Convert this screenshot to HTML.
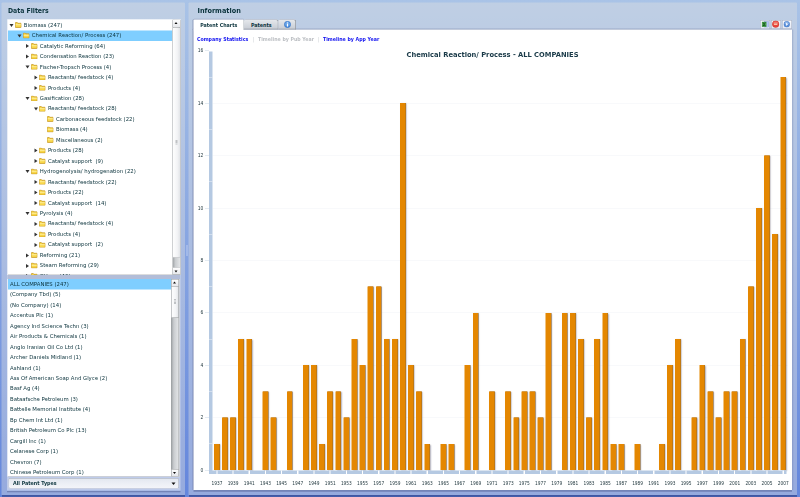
<!DOCTYPE html>
<html lang="en"><head><meta charset="utf-8"><title>Patent Explorer</title>
<style>
html,body{margin:0;padding:0;}
html{width:800px;height:497px;overflow:hidden;}
body{width:800px;height:497px;overflow:hidden;position:relative;background:linear-gradient(to bottom,rgb(169,195,231),rgb(100,134,220));}
#w{position:absolute;left:0;top:0;width:1600px;height:994px;transform:scale(.5);transform-origin:0 0;filter:blur(.6px);
 font-family:"DejaVu Sans","Liberation Sans",sans-serif;color:#0b333c;overflow:hidden;}
.abs{position:absolute;}
.panel{position:absolute;top:4.6px;height:985px;background:rgba(226,226,226,.4);border-radius:2px 2px 0 0;}
.pshadow{position:absolute;top:989.6px;height:4.4px;background:linear-gradient(to bottom,rgba(30,45,110,.55),rgba(30,45,110,.42));}
.ptitle{position:absolute;top:11px;font-weight:bold;font-size:12.6px;line-height:20px;white-space:pre;color:#0b333c;}
.box{position:absolute;background:#fff;overflow:hidden;box-shadow:inset 0 0 0 1px #b7babc;}
.row{position:absolute;left:1px;height:20.92px;line-height:20.92px;font-size:10.7px;white-space:pre;}
.sel{background:#7fceff;}
.fold{position:absolute;top:4.2px;width:13px;height:11.5px;}
.arr{position:absolute;width:0;height:0;}
.arr.c{top:6.4px;border-left:6px solid #333;border-top:4px solid transparent;border-bottom:4px solid transparent;}
.arr.o{top:7.6px;border-top:6px solid #333;border-left:4px solid transparent;border-right:4px solid transparent;}
.sb{position:absolute;background:linear-gradient(to right,#9a9ea1,#c9cccf 35%,#e6e8ea);box-shadow:inset 0 0 0 1px #9ea2a5;}
.sbtn{position:absolute;left:0;width:100%;background:linear-gradient(to bottom,#fff,#e4e6ea);box-shadow:inset 0 0 0 1px #8d9194;border-radius:1px;}
.sthumb{position:absolute;left:0;width:100%;background:linear-gradient(to right,#fff,#f3f4f6 60%,#dfe2e6);box-shadow:inset 0 0 0 1px #8d9194;border-radius:2px;}
.tri-u{position:absolute;left:50%;margin-left:-3.4px;width:0;height:0;border-bottom:4.4px solid #111;border-left:3.4px solid transparent;border-right:3.4px solid transparent;}
.tri-d{position:absolute;left:50%;margin-left:-3.4px;width:0;height:0;border-top:4.4px solid #111;border-left:3.4px solid transparent;border-right:3.4px solid transparent;}
.bar{position:absolute;width:10.8px;background:#e48701;box-shadow:1.1px 0 0 #9a6a2a,2px 1px 2.5px rgba(40,50,90,.35);}
.xl{position:absolute;top:957px;width:40px;margin-left:-20px;text-align:center;font-size:8.6px;line-height:18px;color:#22383f;}
.yl{position:absolute;left:380px;width:26.5px;text-align:right;font-size:8.8px;line-height:14px;color:#22383f;}
.tab{position:absolute;top:38.8px;height:20.4px;font-weight:bold;font-size:9.6px;line-height:21px;text-align:center;white-space:pre;}
.lnk{position:absolute;top:68px;line-height:20px;font-size:9.45px;font-weight:bold;white-space:pre;}
</style></head>
<body><div id="w">
<div class="panel" style="left:3.2px;width:367px;"></div><i class="pshadow" style="left:4px;width:366.2px"></i>
<i class="abs" style="left:13.5px;top:38px;width:347px;height:943px;background:rgba(255,255,255,.38);box-shadow:0 3.6px 0 rgba(60,70,120,.38)"></i>
<div class="ptitle" style="left:16px;font-size:12.3px">Data Filters</div>
<div class="box" style="left:15px;top:39px;width:346px;height:511px;">
<div class="row" style="top:1.00px;width:329px;"><i class="arr o" style="left:3.2px"></i><svg class="fold" style="left:14.0px" viewBox="0 0 13 11.5"><path d="M0.5 2.2 Q0.5 1 1.6 1 L4.6 1 L5.8 2.6 L11.6 2.6 Q12.5 2.6 12.5 3.6 L12.5 10.2 Q12.5 11 11.6 11 L1.4 11 Q0.5 11 0.5 10.2 Z" fill="#f8d648" stroke="#bd8a14" stroke-width="1.25"/><path d="M1.4 4.6 L11.6 4.6 L11.6 6.4 L1.4 6.4 Z" fill="#fff3a8" opacity=".9"/></svg><span class="abs" style="left:31.5px;top:0">Biomass (247)</span></div>
<div class="row sel" style="top:21.92px;width:329px;"><i class="arr o" style="left:19.3px"></i><svg class="fold" style="left:30.1px" viewBox="0 0 13 11.5"><path d="M0.5 2.2 Q0.5 1 1.6 1 L4.6 1 L5.8 2.6 L11.6 2.6 Q12.5 2.6 12.5 3.6 L12.5 10.2 Q12.5 11 11.6 11 L1.4 11 Q0.5 11 0.5 10.2 Z" fill="#f8d648" stroke="#bd8a14" stroke-width="1.25"/><path d="M1.4 4.6 L11.6 4.6 L11.6 6.4 L1.4 6.4 Z" fill="#fff3a8" opacity=".9"/></svg><span class="abs" style="left:47.6px;top:0">Chemical Reaction/ Process (247)</span></div>
<div class="row" style="top:42.84px;width:329px;"><i class="arr c" style="left:36.4px"></i><svg class="fold" style="left:46.2px" viewBox="0 0 13 11.5"><path d="M0.5 2.2 Q0.5 1 1.6 1 L4.6 1 L5.8 2.6 L11.6 2.6 Q12.5 2.6 12.5 3.6 L12.5 10.2 Q12.5 11 11.6 11 L1.4 11 Q0.5 11 0.5 10.2 Z" fill="#f8d648" stroke="#bd8a14" stroke-width="1.25"/><path d="M1.4 4.6 L11.6 4.6 L11.6 6.4 L1.4 6.4 Z" fill="#fff3a8" opacity=".9"/></svg><span class="abs" style="left:63.7px;top:0">Catalytic Reforming (64)</span></div>
<div class="row" style="top:63.76px;width:329px;"><i class="arr c" style="left:36.4px"></i><svg class="fold" style="left:46.2px" viewBox="0 0 13 11.5"><path d="M0.5 2.2 Q0.5 1 1.6 1 L4.6 1 L5.8 2.6 L11.6 2.6 Q12.5 2.6 12.5 3.6 L12.5 10.2 Q12.5 11 11.6 11 L1.4 11 Q0.5 11 0.5 10.2 Z" fill="#f8d648" stroke="#bd8a14" stroke-width="1.25"/><path d="M1.4 4.6 L11.6 4.6 L11.6 6.4 L1.4 6.4 Z" fill="#fff3a8" opacity=".9"/></svg><span class="abs" style="left:63.7px;top:0">Condensation Reaction (23)</span></div>
<div class="row" style="top:84.68px;width:329px;"><i class="arr o" style="left:35.4px"></i><svg class="fold" style="left:46.2px" viewBox="0 0 13 11.5"><path d="M0.5 2.2 Q0.5 1 1.6 1 L4.6 1 L5.8 2.6 L11.6 2.6 Q12.5 2.6 12.5 3.6 L12.5 10.2 Q12.5 11 11.6 11 L1.4 11 Q0.5 11 0.5 10.2 Z" fill="#f8d648" stroke="#bd8a14" stroke-width="1.25"/><path d="M1.4 4.6 L11.6 4.6 L11.6 6.4 L1.4 6.4 Z" fill="#fff3a8" opacity=".9"/></svg><span class="abs" style="left:63.7px;top:0">Fischer-Tropsch Process (4)</span></div>
<div class="row" style="top:105.60px;width:329px;"><i class="arr c" style="left:52.5px"></i><svg class="fold" style="left:62.3px" viewBox="0 0 13 11.5"><path d="M0.5 2.2 Q0.5 1 1.6 1 L4.6 1 L5.8 2.6 L11.6 2.6 Q12.5 2.6 12.5 3.6 L12.5 10.2 Q12.5 11 11.6 11 L1.4 11 Q0.5 11 0.5 10.2 Z" fill="#f8d648" stroke="#bd8a14" stroke-width="1.25"/><path d="M1.4 4.6 L11.6 4.6 L11.6 6.4 L1.4 6.4 Z" fill="#fff3a8" opacity=".9"/></svg><span class="abs" style="left:79.8px;top:0">Reactants/ feedstock (4)</span></div>
<div class="row" style="top:126.52px;width:329px;"><i class="arr c" style="left:52.5px"></i><svg class="fold" style="left:62.3px" viewBox="0 0 13 11.5"><path d="M0.5 2.2 Q0.5 1 1.6 1 L4.6 1 L5.8 2.6 L11.6 2.6 Q12.5 2.6 12.5 3.6 L12.5 10.2 Q12.5 11 11.6 11 L1.4 11 Q0.5 11 0.5 10.2 Z" fill="#f8d648" stroke="#bd8a14" stroke-width="1.25"/><path d="M1.4 4.6 L11.6 4.6 L11.6 6.4 L1.4 6.4 Z" fill="#fff3a8" opacity=".9"/></svg><span class="abs" style="left:79.8px;top:0">Products (4)</span></div>
<div class="row" style="top:147.44px;width:329px;"><i class="arr o" style="left:35.4px"></i><svg class="fold" style="left:46.2px" viewBox="0 0 13 11.5"><path d="M0.5 2.2 Q0.5 1 1.6 1 L4.6 1 L5.8 2.6 L11.6 2.6 Q12.5 2.6 12.5 3.6 L12.5 10.2 Q12.5 11 11.6 11 L1.4 11 Q0.5 11 0.5 10.2 Z" fill="#f8d648" stroke="#bd8a14" stroke-width="1.25"/><path d="M1.4 4.6 L11.6 4.6 L11.6 6.4 L1.4 6.4 Z" fill="#fff3a8" opacity=".9"/></svg><span class="abs" style="left:63.7px;top:0">Gasification (28)</span></div>
<div class="row" style="top:168.36px;width:329px;"><i class="arr o" style="left:51.5px"></i><svg class="fold" style="left:62.3px" viewBox="0 0 13 11.5"><path d="M0.5 2.2 Q0.5 1 1.6 1 L4.6 1 L5.8 2.6 L11.6 2.6 Q12.5 2.6 12.5 3.6 L12.5 10.2 Q12.5 11 11.6 11 L1.4 11 Q0.5 11 0.5 10.2 Z" fill="#f8d648" stroke="#bd8a14" stroke-width="1.25"/><path d="M1.4 4.6 L11.6 4.6 L11.6 6.4 L1.4 6.4 Z" fill="#fff3a8" opacity=".9"/></svg><span class="abs" style="left:79.8px;top:0">Reactants/ feedstock (28)</span></div>
<div class="row" style="top:189.28px;width:329px;"><svg class="fold" style="left:78.4px" viewBox="0 0 13 11.5"><path d="M0.5 2.2 Q0.5 1 1.6 1 L4.6 1 L5.8 2.6 L11.6 2.6 Q12.5 2.6 12.5 3.6 L12.5 10.2 Q12.5 11 11.6 11 L1.4 11 Q0.5 11 0.5 10.2 Z" fill="#f8d648" stroke="#bd8a14" stroke-width="1.25"/><path d="M1.4 4.6 L11.6 4.6 L11.6 6.4 L1.4 6.4 Z" fill="#fff3a8" opacity=".9"/></svg><span class="abs" style="left:95.9px;top:0">Carbonaceous feedstock (22)</span></div>
<div class="row" style="top:210.20px;width:329px;"><svg class="fold" style="left:78.4px" viewBox="0 0 13 11.5"><path d="M0.5 2.2 Q0.5 1 1.6 1 L4.6 1 L5.8 2.6 L11.6 2.6 Q12.5 2.6 12.5 3.6 L12.5 10.2 Q12.5 11 11.6 11 L1.4 11 Q0.5 11 0.5 10.2 Z" fill="#f8d648" stroke="#bd8a14" stroke-width="1.25"/><path d="M1.4 4.6 L11.6 4.6 L11.6 6.4 L1.4 6.4 Z" fill="#fff3a8" opacity=".9"/></svg><span class="abs" style="left:95.9px;top:0">Biomass (4)</span></div>
<div class="row" style="top:231.12px;width:329px;"><svg class="fold" style="left:78.4px" viewBox="0 0 13 11.5"><path d="M0.5 2.2 Q0.5 1 1.6 1 L4.6 1 L5.8 2.6 L11.6 2.6 Q12.5 2.6 12.5 3.6 L12.5 10.2 Q12.5 11 11.6 11 L1.4 11 Q0.5 11 0.5 10.2 Z" fill="#f8d648" stroke="#bd8a14" stroke-width="1.25"/><path d="M1.4 4.6 L11.6 4.6 L11.6 6.4 L1.4 6.4 Z" fill="#fff3a8" opacity=".9"/></svg><span class="abs" style="left:95.9px;top:0">Miscellaneous (2)</span></div>
<div class="row" style="top:252.04px;width:329px;"><i class="arr c" style="left:52.5px"></i><svg class="fold" style="left:62.3px" viewBox="0 0 13 11.5"><path d="M0.5 2.2 Q0.5 1 1.6 1 L4.6 1 L5.8 2.6 L11.6 2.6 Q12.5 2.6 12.5 3.6 L12.5 10.2 Q12.5 11 11.6 11 L1.4 11 Q0.5 11 0.5 10.2 Z" fill="#f8d648" stroke="#bd8a14" stroke-width="1.25"/><path d="M1.4 4.6 L11.6 4.6 L11.6 6.4 L1.4 6.4 Z" fill="#fff3a8" opacity=".9"/></svg><span class="abs" style="left:79.8px;top:0">Products (28)</span></div>
<div class="row" style="top:272.96px;width:329px;"><i class="arr c" style="left:52.5px"></i><svg class="fold" style="left:62.3px" viewBox="0 0 13 11.5"><path d="M0.5 2.2 Q0.5 1 1.6 1 L4.6 1 L5.8 2.6 L11.6 2.6 Q12.5 2.6 12.5 3.6 L12.5 10.2 Q12.5 11 11.6 11 L1.4 11 Q0.5 11 0.5 10.2 Z" fill="#f8d648" stroke="#bd8a14" stroke-width="1.25"/><path d="M1.4 4.6 L11.6 4.6 L11.6 6.4 L1.4 6.4 Z" fill="#fff3a8" opacity=".9"/></svg><span class="abs" style="left:79.8px;top:0">Catalyst support  (9)</span></div>
<div class="row" style="top:293.88px;width:329px;"><i class="arr o" style="left:35.4px"></i><svg class="fold" style="left:46.2px" viewBox="0 0 13 11.5"><path d="M0.5 2.2 Q0.5 1 1.6 1 L4.6 1 L5.8 2.6 L11.6 2.6 Q12.5 2.6 12.5 3.6 L12.5 10.2 Q12.5 11 11.6 11 L1.4 11 Q0.5 11 0.5 10.2 Z" fill="#f8d648" stroke="#bd8a14" stroke-width="1.25"/><path d="M1.4 4.6 L11.6 4.6 L11.6 6.4 L1.4 6.4 Z" fill="#fff3a8" opacity=".9"/></svg><span class="abs" style="left:63.7px;top:0">Hydrogenolysis/ hydrogenation (22)</span></div>
<div class="row" style="top:314.80px;width:329px;"><i class="arr c" style="left:52.5px"></i><svg class="fold" style="left:62.3px" viewBox="0 0 13 11.5"><path d="M0.5 2.2 Q0.5 1 1.6 1 L4.6 1 L5.8 2.6 L11.6 2.6 Q12.5 2.6 12.5 3.6 L12.5 10.2 Q12.5 11 11.6 11 L1.4 11 Q0.5 11 0.5 10.2 Z" fill="#f8d648" stroke="#bd8a14" stroke-width="1.25"/><path d="M1.4 4.6 L11.6 4.6 L11.6 6.4 L1.4 6.4 Z" fill="#fff3a8" opacity=".9"/></svg><span class="abs" style="left:79.8px;top:0">Reactants/ feedstock (22)</span></div>
<div class="row" style="top:335.72px;width:329px;"><i class="arr c" style="left:52.5px"></i><svg class="fold" style="left:62.3px" viewBox="0 0 13 11.5"><path d="M0.5 2.2 Q0.5 1 1.6 1 L4.6 1 L5.8 2.6 L11.6 2.6 Q12.5 2.6 12.5 3.6 L12.5 10.2 Q12.5 11 11.6 11 L1.4 11 Q0.5 11 0.5 10.2 Z" fill="#f8d648" stroke="#bd8a14" stroke-width="1.25"/><path d="M1.4 4.6 L11.6 4.6 L11.6 6.4 L1.4 6.4 Z" fill="#fff3a8" opacity=".9"/></svg><span class="abs" style="left:79.8px;top:0">Products (22)</span></div>
<div class="row" style="top:356.64px;width:329px;"><i class="arr c" style="left:52.5px"></i><svg class="fold" style="left:62.3px" viewBox="0 0 13 11.5"><path d="M0.5 2.2 Q0.5 1 1.6 1 L4.6 1 L5.8 2.6 L11.6 2.6 Q12.5 2.6 12.5 3.6 L12.5 10.2 Q12.5 11 11.6 11 L1.4 11 Q0.5 11 0.5 10.2 Z" fill="#f8d648" stroke="#bd8a14" stroke-width="1.25"/><path d="M1.4 4.6 L11.6 4.6 L11.6 6.4 L1.4 6.4 Z" fill="#fff3a8" opacity=".9"/></svg><span class="abs" style="left:79.8px;top:0">Catalyst support  (14)</span></div>
<div class="row" style="top:377.56px;width:329px;"><i class="arr o" style="left:35.4px"></i><svg class="fold" style="left:46.2px" viewBox="0 0 13 11.5"><path d="M0.5 2.2 Q0.5 1 1.6 1 L4.6 1 L5.8 2.6 L11.6 2.6 Q12.5 2.6 12.5 3.6 L12.5 10.2 Q12.5 11 11.6 11 L1.4 11 Q0.5 11 0.5 10.2 Z" fill="#f8d648" stroke="#bd8a14" stroke-width="1.25"/><path d="M1.4 4.6 L11.6 4.6 L11.6 6.4 L1.4 6.4 Z" fill="#fff3a8" opacity=".9"/></svg><span class="abs" style="left:63.7px;top:0">Pyrolysis (4)</span></div>
<div class="row" style="top:398.48px;width:329px;"><i class="arr c" style="left:52.5px"></i><svg class="fold" style="left:62.3px" viewBox="0 0 13 11.5"><path d="M0.5 2.2 Q0.5 1 1.6 1 L4.6 1 L5.8 2.6 L11.6 2.6 Q12.5 2.6 12.5 3.6 L12.5 10.2 Q12.5 11 11.6 11 L1.4 11 Q0.5 11 0.5 10.2 Z" fill="#f8d648" stroke="#bd8a14" stroke-width="1.25"/><path d="M1.4 4.6 L11.6 4.6 L11.6 6.4 L1.4 6.4 Z" fill="#fff3a8" opacity=".9"/></svg><span class="abs" style="left:79.8px;top:0">Reactants/ feedstock (4)</span></div>
<div class="row" style="top:419.40px;width:329px;"><i class="arr c" style="left:52.5px"></i><svg class="fold" style="left:62.3px" viewBox="0 0 13 11.5"><path d="M0.5 2.2 Q0.5 1 1.6 1 L4.6 1 L5.8 2.6 L11.6 2.6 Q12.5 2.6 12.5 3.6 L12.5 10.2 Q12.5 11 11.6 11 L1.4 11 Q0.5 11 0.5 10.2 Z" fill="#f8d648" stroke="#bd8a14" stroke-width="1.25"/><path d="M1.4 4.6 L11.6 4.6 L11.6 6.4 L1.4 6.4 Z" fill="#fff3a8" opacity=".9"/></svg><span class="abs" style="left:79.8px;top:0">Products (4)</span></div>
<div class="row" style="top:440.32px;width:329px;"><i class="arr c" style="left:52.5px"></i><svg class="fold" style="left:62.3px" viewBox="0 0 13 11.5"><path d="M0.5 2.2 Q0.5 1 1.6 1 L4.6 1 L5.8 2.6 L11.6 2.6 Q12.5 2.6 12.5 3.6 L12.5 10.2 Q12.5 11 11.6 11 L1.4 11 Q0.5 11 0.5 10.2 Z" fill="#f8d648" stroke="#bd8a14" stroke-width="1.25"/><path d="M1.4 4.6 L11.6 4.6 L11.6 6.4 L1.4 6.4 Z" fill="#fff3a8" opacity=".9"/></svg><span class="abs" style="left:79.8px;top:0">Catalyst support  (2)</span></div>
<div class="row" style="top:461.24px;width:329px;"><i class="arr c" style="left:36.4px"></i><svg class="fold" style="left:46.2px" viewBox="0 0 13 11.5"><path d="M0.5 2.2 Q0.5 1 1.6 1 L4.6 1 L5.8 2.6 L11.6 2.6 Q12.5 2.6 12.5 3.6 L12.5 10.2 Q12.5 11 11.6 11 L1.4 11 Q0.5 11 0.5 10.2 Z" fill="#f8d648" stroke="#bd8a14" stroke-width="1.25"/><path d="M1.4 4.6 L11.6 4.6 L11.6 6.4 L1.4 6.4 Z" fill="#fff3a8" opacity=".9"/></svg><span class="abs" style="left:63.7px;top:0">Reforming (21)</span></div>
<div class="row" style="top:482.16px;width:329px;"><i class="arr c" style="left:36.4px"></i><svg class="fold" style="left:46.2px" viewBox="0 0 13 11.5"><path d="M0.5 2.2 Q0.5 1 1.6 1 L4.6 1 L5.8 2.6 L11.6 2.6 Q12.5 2.6 12.5 3.6 L12.5 10.2 Q12.5 11 11.6 11 L1.4 11 Q0.5 11 0.5 10.2 Z" fill="#f8d648" stroke="#bd8a14" stroke-width="1.25"/><path d="M1.4 4.6 L11.6 4.6 L11.6 6.4 L1.4 6.4 Z" fill="#fff3a8" opacity=".9"/></svg><span class="abs" style="left:63.7px;top:0">Steam Reforming (29)</span></div>
<div class="row" style="top:503.08px;width:329px;"><i class="arr c" style="left:36.4px"></i><svg class="fold" style="left:46.2px" viewBox="0 0 13 11.5"><path d="M0.5 2.2 Q0.5 1 1.6 1 L4.6 1 L5.8 2.6 L11.6 2.6 Q12.5 2.6 12.5 3.6 L12.5 10.2 Q12.5 11 11.6 11 L1.4 11 Q0.5 11 0.5 10.2 Z" fill="#f8d648" stroke="#bd8a14" stroke-width="1.25"/><path d="M1.4 4.6 L11.6 4.6 L11.6 6.4 L1.4 6.4 Z" fill="#fff3a8" opacity=".9"/></svg><span class="abs" style="left:63.7px;top:0">Others (46)</span></div>
<div class="sb" style="left:329.5px;top:0;width:16.5px;height:511px;"><div class="sbtn" style="top:0;height:15.5px"><i class="tri-u" style="top:5px"></i></div><div class="sthumb" style="top:15px;height:461px"><i class="abs" style="left:6px;top:226px;width:4.5px;height:1px;background:#8a8e92;box-shadow:0 2.5px 0 #8a8e92,0 5px 0 #8a8e92,0 7.5px 0 #8a8e92"></i></div><div class="sbtn" style="top:495.5px;height:15.5px"><i class="tri-d" style="top:6px"></i></div></div>
</div>
<i class="abs" style="left:15px;top:550px;width:345px;height:7.8px;background:rgba(90,100,140,.2)"></i>
<div class="box" style="left:15px;top:557.8px;width:343.5px;height:395.4px;">
<div class="row sel" style="top:0.40px;width:326px;"><span class="abs" style="left:4px;top:0">ALL COMPANIES (247)</span></div>
<div class="row" style="top:21.32px;width:326px;"><span class="abs" style="left:4px;top:0">(Company Tbd) (5)</span></div>
<div class="row" style="top:42.24px;width:326px;"><span class="abs" style="left:4px;top:0">(No Company) (14)</span></div>
<div class="row" style="top:63.16px;width:326px;"><span class="abs" style="left:4px;top:0">Accentus Plc (1)</span></div>
<div class="row" style="top:84.08px;width:326px;"><span class="abs" style="left:4px;top:0">Agency Ind Science Techn (3)</span></div>
<div class="row" style="top:105.00px;width:326px;"><span class="abs" style="left:4px;top:0">Air Products &amp; Chemicals (1)</span></div>
<div class="row" style="top:125.92px;width:326px;"><span class="abs" style="left:4px;top:0">Anglo Iranian Oil Co Ltd (1)</span></div>
<div class="row" style="top:146.84px;width:326px;"><span class="abs" style="left:4px;top:0">Archer Daniels Midland (1)</span></div>
<div class="row" style="top:167.76px;width:326px;"><span class="abs" style="left:4px;top:0">Ashland (1)</span></div>
<div class="row" style="top:188.68px;width:326px;"><span class="abs" style="left:4px;top:0">Ass Of American Soap And Glyce (2)</span></div>
<div class="row" style="top:209.60px;width:326px;"><span class="abs" style="left:4px;top:0">Basf Ag (4)</span></div>
<div class="row" style="top:230.52px;width:326px;"><span class="abs" style="left:4px;top:0">Bataafsche Petroleum (3)</span></div>
<div class="row" style="top:251.44px;width:326px;"><span class="abs" style="left:4px;top:0">Battelle Memorial Institute (4)</span></div>
<div class="row" style="top:272.36px;width:326px;"><span class="abs" style="left:4px;top:0">Bp Chem Int Ltd (1)</span></div>
<div class="row" style="top:293.28px;width:326px;"><span class="abs" style="left:4px;top:0">British Petroleum Co Plc (13)</span></div>
<div class="row" style="top:314.20px;width:326px;"><span class="abs" style="left:4px;top:0">Cargill Inc (1)</span></div>
<div class="row" style="top:335.12px;width:326px;"><span class="abs" style="left:4px;top:0">Celanese Corp (1)</span></div>
<div class="row" style="top:356.04px;width:326px;"><span class="abs" style="left:4px;top:0">Chevron (7)</span></div>
<div class="row" style="top:376.96px;width:326px;"><span class="abs" style="left:4px;top:0">Chinese Petroleum Corp (1)</span></div>
<div class="sb" style="left:326.5px;top:0;width:16.5px;height:395.4px;"><div class="sbtn" style="top:0;height:15px"><i class="tri-u" style="top:5px"></i></div><div class="sthumb" style="top:14.5px;height:64px"><i class="abs" style="left:6px;top:27px;width:4.5px;height:1px;background:#8a8e92;box-shadow:0 2.5px 0 #8a8e92,0 5px 0 #8a8e92,0 7.5px 0 #8a8e92"></i></div><div class="sbtn" style="top:380.4px;height:15px"><i class="tri-d" style="top:5.5px"></i></div></div>
</div>
<div class="abs" style="left:16.5px;top:955.6px;width:341px;height:21.4px;border-radius:3px;background:linear-gradient(to bottom,#e2e6ef,#eceff5 50%,#f4f5f9);box-shadow:inset 0 0 0 1px #9aa3b3;"><span class="abs" style="left:9.5px;top:0;line-height:21.4px;font-size:9.6px;font-weight:bold;white-space:pre">All Patent Types</span><i class="tri-d" style="left:auto;right:7px;top:9px;margin:0;border-top-width:5px;border-left-width:4px;border-right-width:4px"></i></div>
<div class="panel" style="left:377px;width:1217px;"></div><i class="pshadow" style="left:377.8px;width:1216.2px"></i>
<div class="ptitle" style="left:395px;font-size:13.05px">Information</div>
<i class="abs" style="left:372.6px;top:490px;width:2px;height:22px;background:rgba(235,240,250,.55)"></i>
<div class="abs" style="left:387px;top:59px;width:1197px;height:921px;background:#fff;box-shadow:-2.4px 0 0 rgba(100,112,150,.4),2.6px 0 0 rgba(100,112,150,.25),0 -1.8px 0 rgba(100,112,150,.45),0 3.6px 0 rgba(60,70,120,.38);"></div>
<div class="tab" style="left:387px;width:101px;background:#fff;box-shadow:-2.4px 0 0 rgba(100,112,150,.4),0 -1.6px 0 rgba(100,112,150,.4),inset -1px 0 0 #aab3b8;height:21.5px;border-radius:2px 2px 0 0;">Patent Charts</div>
<div class="tab" style="left:488px;width:69px;background:linear-gradient(to bottom,#e6e9ed,#c6cbd3);box-shadow:inset -1.4px 1px 0 #8f959d,inset 0 -1.4px 0 #8f959d;border-radius:3px 3px 0 0;">Patents</div>
<div class="tab" style="left:557px;width:35px;background:linear-gradient(to bottom,#e6e9ed,#c6cbd3);box-shadow:inset -1.4px 1px 0 #8f959d,inset 0 -1.4px 0 #8f959d;border-radius:3px 3px 0 0;"><svg class="abs" style="left:10.5px;top:3px" width="14" height="14" viewBox="0 0 14 14"><circle cx="7" cy="7" r="6.3" fill="#4f8fdc" stroke="#2f6fc4" stroke-width="1"/><circle cx="7" cy="6" r="4.6" fill="#7fb4f0" opacity=".7"/><rect x="6" y="6" width="2" height="5" fill="#fff"/><rect x="6" y="3" width="2" height="2" fill="#fff"/></svg></div>
<div class="abs" style="left:1520.0px;top:39.6px;width:20.2px;height:18.2px;background:linear-gradient(to bottom,#f7f9fd,#e4e9f4);box-shadow:inset 0 0 0 1px #98a2b8;border-radius:2px;"><svg class="abs" style="left:2.6px;top:2.4px" width="15" height="13.4" viewBox="0 0 15 13.4"><rect x="5.5" y="0.6" width="9" height="12.2" fill="#b4c4f4" stroke="#8496d8" stroke-width=".8"/><rect x="0.6" y="1.6" width="9.4" height="10.2" fill="#4a9e4a"/><path d="M2 3 L4.4 6.7 L2 10.4 L3.9 10.4 L5.3 8 L6.7 10.4 L8.6 10.4 L6.2 6.7 L8.6 3 L6.7 3 L5.3 5.4 L3.9 3 Z" fill="#0c4d12"/><path d="M1 6.2 L9.6 6.2" stroke="#7cc47c" stroke-width=".7" opacity=".6"/></svg></div>
<div class="abs" style="left:1541.6px;top:39.6px;width:20.2px;height:18.2px;background:linear-gradient(to bottom,#f7f9fd,#e4e9f4);box-shadow:inset 0 0 0 1px #98a2b8;border-radius:2px;"><svg class="abs" style="left:2.4px;top:1.8px" width="14.6" height="14.6" viewBox="0 0 14 14"><circle cx="7" cy="7" r="6.4" fill="#e8463c" stroke="#c23028" stroke-width=".8"/><ellipse cx="7" cy="4.6" rx="4.6" ry="2.8" fill="#f58a80" opacity=".7"/><rect x="3.6" y="6" width="6.8" height="2.2" rx=".6" fill="#fde9c8"/></svg></div>
<div class="abs" style="left:1563.6px;top:39.6px;width:20.2px;height:18.2px;background:linear-gradient(to bottom,#f7f9fd,#e4e9f4);box-shadow:inset 0 0 0 1px #98a2b8;border-radius:2px;"><svg class="abs" style="left:3.4px;top:2.6px" width="13" height="13" viewBox="0 0 14 14"><circle cx="7" cy="7" r="6.4" fill="#5a8fd8" stroke="#3c6fbe" stroke-width=".8"/><ellipse cx="7" cy="4.6" rx="4.4" ry="2.8" fill="#9cc0f0" opacity=".7"/><path d="M5.2 3.4 L10 7 L5.2 10.6 Z" fill="#f4f8ff" opacity=".95"/></svg></div>
<span class="lnk" style="left:394px;color:#1212f0;">Company Statistics</span><span class="lnk" style="left:505px;color:#c9cdd2;font-weight:normal">|</span><span class="lnk" style="left:516px;color:#bcbfc3;">Timeline by Pub Year</span><span class="lnk" style="left:635.5px;color:#c9cdd2;font-weight:normal">|</span><span class="lnk" style="left:646px;color:#1212f0;">Timeline by App Year</span>
<div class="abs" style="left:812px;top:98px;width:346px;text-align:center;font-weight:bold;font-size:13.45px;line-height:22px;white-space:pre;color:#1a3a48;">Chemical Reaction/ Process - ALL COMPANIES</div>
<i class="abs" style="left:425px;top:834.7px;width:1150px;height:1px;background:#f1f3f7"></i><i class="abs" style="left:425px;top:729.9px;width:1150px;height:1px;background:#f1f3f7"></i><i class="abs" style="left:425px;top:625.1px;width:1150px;height:1px;background:#f1f3f7"></i><i class="abs" style="left:425px;top:520.3px;width:1150px;height:1px;background:#f1f3f7"></i><i class="abs" style="left:425px;top:415.5px;width:1150px;height:1px;background:#f1f3f7"></i><i class="abs" style="left:425px;top:310.7px;width:1150px;height:1px;background:#f1f3f7"></i><i class="abs" style="left:425px;top:205.9px;width:1150px;height:1px;background:#f1f3f7"></i>
<i class="bar" style="left:427.90px;top:887.6px;height:52.4px"></i><i class="bar" style="left:444.08px;top:835.2px;height:104.8px"></i><i class="bar" style="left:460.26px;top:835.2px;height:104.8px"></i><i class="bar" style="left:476.44px;top:678.0px;height:262.0px"></i><i class="bar" style="left:492.62px;top:678.0px;height:262.0px"></i><i class="bar" style="left:524.98px;top:782.8px;height:157.2px"></i><i class="bar" style="left:541.16px;top:835.2px;height:104.8px"></i><i class="bar" style="left:573.52px;top:782.8px;height:157.2px"></i><i class="bar" style="left:605.88px;top:730.4px;height:209.6px"></i><i class="bar" style="left:622.06px;top:730.4px;height:209.6px"></i><i class="bar" style="left:638.24px;top:887.6px;height:52.4px"></i><i class="bar" style="left:654.42px;top:782.8px;height:157.2px"></i><i class="bar" style="left:670.60px;top:782.8px;height:157.2px"></i><i class="bar" style="left:686.78px;top:835.2px;height:104.8px"></i><i class="bar" style="left:702.96px;top:678.0px;height:262.0px"></i><i class="bar" style="left:719.14px;top:730.4px;height:209.6px"></i><i class="bar" style="left:735.32px;top:573.2px;height:366.8px"></i><i class="bar" style="left:751.50px;top:573.2px;height:366.8px"></i><i class="bar" style="left:767.68px;top:678.0px;height:262.0px"></i><i class="bar" style="left:783.86px;top:678.0px;height:262.0px"></i><i class="bar" style="left:800.04px;top:206.4px;height:733.6px"></i><i class="bar" style="left:816.22px;top:730.4px;height:209.6px"></i><i class="bar" style="left:832.40px;top:782.8px;height:157.2px"></i><i class="bar" style="left:848.58px;top:887.6px;height:52.4px"></i><i class="bar" style="left:880.94px;top:887.6px;height:52.4px"></i><i class="bar" style="left:897.12px;top:887.6px;height:52.4px"></i><i class="bar" style="left:929.48px;top:730.4px;height:209.6px"></i><i class="bar" style="left:945.66px;top:625.6px;height:314.4px"></i><i class="bar" style="left:978.02px;top:782.8px;height:157.2px"></i><i class="bar" style="left:1010.38px;top:782.8px;height:157.2px"></i><i class="bar" style="left:1026.56px;top:835.2px;height:104.8px"></i><i class="bar" style="left:1042.74px;top:782.8px;height:157.2px"></i><i class="bar" style="left:1058.92px;top:782.8px;height:157.2px"></i><i class="bar" style="left:1075.10px;top:835.2px;height:104.8px"></i><i class="bar" style="left:1091.28px;top:625.6px;height:314.4px"></i><i class="bar" style="left:1123.64px;top:625.6px;height:314.4px"></i><i class="bar" style="left:1139.82px;top:625.6px;height:314.4px"></i><i class="bar" style="left:1156.00px;top:678.0px;height:262.0px"></i><i class="bar" style="left:1172.18px;top:835.2px;height:104.8px"></i><i class="bar" style="left:1188.36px;top:678.0px;height:262.0px"></i><i class="bar" style="left:1204.54px;top:625.6px;height:314.4px"></i><i class="bar" style="left:1220.72px;top:887.6px;height:52.4px"></i><i class="bar" style="left:1236.90px;top:887.6px;height:52.4px"></i><i class="bar" style="left:1269.26px;top:887.6px;height:52.4px"></i><i class="bar" style="left:1317.80px;top:887.6px;height:52.4px"></i><i class="bar" style="left:1333.98px;top:730.4px;height:209.6px"></i><i class="bar" style="left:1350.16px;top:678.0px;height:262.0px"></i><i class="bar" style="left:1382.52px;top:835.2px;height:104.8px"></i><i class="bar" style="left:1398.70px;top:730.4px;height:209.6px"></i><i class="bar" style="left:1414.88px;top:782.8px;height:157.2px"></i><i class="bar" style="left:1431.06px;top:835.2px;height:104.8px"></i><i class="bar" style="left:1447.24px;top:782.8px;height:157.2px"></i><i class="bar" style="left:1463.42px;top:782.8px;height:157.2px"></i><i class="bar" style="left:1479.60px;top:678.0px;height:262.0px"></i><i class="bar" style="left:1495.78px;top:573.2px;height:366.8px"></i><i class="bar" style="left:1511.96px;top:416.0px;height:524.0px"></i><i class="bar" style="left:1528.14px;top:311.2px;height:628.8px"></i><i class="bar" style="left:1544.32px;top:468.4px;height:471.6px"></i><i class="bar" style="left:1560.50px;top:154.0px;height:786.0px"></i>
<i class="abs" style="left:417.8px;top:102.5px;width:7.2px;height:845px;background:#b5c9e2"></i><i class="abs" style="left:417.8px;top:940.6px;width:1155.6px;height:7px;background:#b5c9e2"></i>
<i class="abs" style="left:410px;top:939.5px;width:8px;height:1px;background:#c9d6e4"></i><span class="yl" style="top:932.6px">0</span><i class="abs" style="left:417.8px;top:887.1px;width:7.2px;height:1px;background:#eef3f8"></i><i class="abs" style="left:410px;top:834.7px;width:8px;height:1px;background:#c9d6e4"></i><span class="yl" style="top:827.8px">2</span><i class="abs" style="left:417.8px;top:782.3px;width:7.2px;height:1px;background:#eef3f8"></i><i class="abs" style="left:410px;top:729.9px;width:8px;height:1px;background:#c9d6e4"></i><span class="yl" style="top:723.0px">4</span><i class="abs" style="left:417.8px;top:677.5px;width:7.2px;height:1px;background:#eef3f8"></i><i class="abs" style="left:410px;top:625.1px;width:8px;height:1px;background:#c9d6e4"></i><span class="yl" style="top:618.2px">6</span><i class="abs" style="left:417.8px;top:572.7px;width:7.2px;height:1px;background:#eef3f8"></i><i class="abs" style="left:410px;top:520.3px;width:8px;height:1px;background:#c9d6e4"></i><span class="yl" style="top:513.4px">8</span><i class="abs" style="left:417.8px;top:467.9px;width:7.2px;height:1px;background:#eef3f8"></i><i class="abs" style="left:410px;top:415.5px;width:8px;height:1px;background:#c9d6e4"></i><span class="yl" style="top:408.6px">10</span><i class="abs" style="left:417.8px;top:363.1px;width:7.2px;height:1px;background:#eef3f8"></i><i class="abs" style="left:410px;top:310.7px;width:8px;height:1px;background:#c9d6e4"></i><span class="yl" style="top:303.8px">12</span><i class="abs" style="left:417.8px;top:258.3px;width:7.2px;height:1px;background:#eef3f8"></i><i class="abs" style="left:410px;top:205.9px;width:8px;height:1px;background:#c9d6e4"></i><span class="yl" style="top:199.0px">14</span><i class="abs" style="left:417.8px;top:153.5px;width:7.2px;height:1px;background:#eef3f8"></i><i class="abs" style="left:410px;top:101.1px;width:8px;height:1px;background:#c9d6e4"></i><span class="yl" style="top:94.2px">16</span>
<i class="abs" style="left:432.6px;top:940.6px;width:2.4px;height:7px;background:#fff"></i><span class="xl" style="left:433.8px">1937</span><i class="abs" style="left:465.0px;top:940.6px;width:2.4px;height:7px;background:#fff"></i><span class="xl" style="left:466.2px">1939</span><i class="abs" style="left:497.3px;top:940.6px;width:2.4px;height:7px;background:#fff"></i><span class="xl" style="left:498.5px">1941</span><i class="abs" style="left:529.7px;top:940.6px;width:2.4px;height:7px;background:#fff"></i><span class="xl" style="left:530.9px">1943</span><i class="abs" style="left:562.0px;top:940.6px;width:2.4px;height:7px;background:#fff"></i><span class="xl" style="left:563.2px">1945</span><i class="abs" style="left:594.4px;top:940.6px;width:2.4px;height:7px;background:#fff"></i><span class="xl" style="left:595.6px">1947</span><i class="abs" style="left:626.8px;top:940.6px;width:2.4px;height:7px;background:#fff"></i><span class="xl" style="left:628.0px">1949</span><i class="abs" style="left:659.1px;top:940.6px;width:2.4px;height:7px;background:#fff"></i><span class="xl" style="left:660.3px">1951</span><i class="abs" style="left:691.5px;top:940.6px;width:2.4px;height:7px;background:#fff"></i><span class="xl" style="left:692.7px">1953</span><i class="abs" style="left:723.8px;top:940.6px;width:2.4px;height:7px;background:#fff"></i><span class="xl" style="left:725.0px">1955</span><i class="abs" style="left:756.2px;top:940.6px;width:2.4px;height:7px;background:#fff"></i><span class="xl" style="left:757.4px">1957</span><i class="abs" style="left:788.6px;top:940.6px;width:2.4px;height:7px;background:#fff"></i><span class="xl" style="left:789.8px">1959</span><i class="abs" style="left:820.9px;top:940.6px;width:2.4px;height:7px;background:#fff"></i><span class="xl" style="left:822.1px">1961</span><i class="abs" style="left:853.3px;top:940.6px;width:2.4px;height:7px;background:#fff"></i><span class="xl" style="left:854.5px">1963</span><i class="abs" style="left:885.6px;top:940.6px;width:2.4px;height:7px;background:#fff"></i><span class="xl" style="left:886.8px">1965</span><i class="abs" style="left:918.0px;top:940.6px;width:2.4px;height:7px;background:#fff"></i><span class="xl" style="left:919.2px">1967</span><i class="abs" style="left:950.4px;top:940.6px;width:2.4px;height:7px;background:#fff"></i><span class="xl" style="left:951.6px">1969</span><i class="abs" style="left:982.7px;top:940.6px;width:2.4px;height:7px;background:#fff"></i><span class="xl" style="left:983.9px">1971</span><i class="abs" style="left:1015.1px;top:940.6px;width:2.4px;height:7px;background:#fff"></i><span class="xl" style="left:1016.3px">1973</span><i class="abs" style="left:1047.4px;top:940.6px;width:2.4px;height:7px;background:#fff"></i><span class="xl" style="left:1048.6px">1975</span><i class="abs" style="left:1079.8px;top:940.6px;width:2.4px;height:7px;background:#fff"></i><span class="xl" style="left:1081.0px">1977</span><i class="abs" style="left:1112.2px;top:940.6px;width:2.4px;height:7px;background:#fff"></i><span class="xl" style="left:1113.4px">1979</span><i class="abs" style="left:1144.5px;top:940.6px;width:2.4px;height:7px;background:#fff"></i><span class="xl" style="left:1145.7px">1981</span><i class="abs" style="left:1176.9px;top:940.6px;width:2.4px;height:7px;background:#fff"></i><span class="xl" style="left:1178.1px">1983</span><i class="abs" style="left:1209.2px;top:940.6px;width:2.4px;height:7px;background:#fff"></i><span class="xl" style="left:1210.4px">1985</span><i class="abs" style="left:1241.6px;top:940.6px;width:2.4px;height:7px;background:#fff"></i><span class="xl" style="left:1242.8px">1987</span><i class="abs" style="left:1274.0px;top:940.6px;width:2.4px;height:7px;background:#fff"></i><span class="xl" style="left:1275.2px">1989</span><i class="abs" style="left:1306.3px;top:940.6px;width:2.4px;height:7px;background:#fff"></i><span class="xl" style="left:1307.5px">1991</span><i class="abs" style="left:1338.7px;top:940.6px;width:2.4px;height:7px;background:#fff"></i><span class="xl" style="left:1339.9px">1993</span><i class="abs" style="left:1371.0px;top:940.6px;width:2.4px;height:7px;background:#fff"></i><span class="xl" style="left:1372.2px">1995</span><i class="abs" style="left:1403.4px;top:940.6px;width:2.4px;height:7px;background:#fff"></i><span class="xl" style="left:1404.6px">1997</span><i class="abs" style="left:1435.8px;top:940.6px;width:2.4px;height:7px;background:#fff"></i><span class="xl" style="left:1437.0px">1999</span><i class="abs" style="left:1468.1px;top:940.6px;width:2.4px;height:7px;background:#fff"></i><span class="xl" style="left:1469.3px">2001</span><i class="abs" style="left:1500.5px;top:940.6px;width:2.4px;height:7px;background:#fff"></i><span class="xl" style="left:1501.7px">2003</span><i class="abs" style="left:1532.8px;top:940.6px;width:2.4px;height:7px;background:#fff"></i><span class="xl" style="left:1534.0px">2005</span><i class="abs" style="left:1565.2px;top:940.6px;width:2.4px;height:7px;background:#fff"></i><span class="xl" style="left:1566.4px">2007</span>
</div></body></html>
